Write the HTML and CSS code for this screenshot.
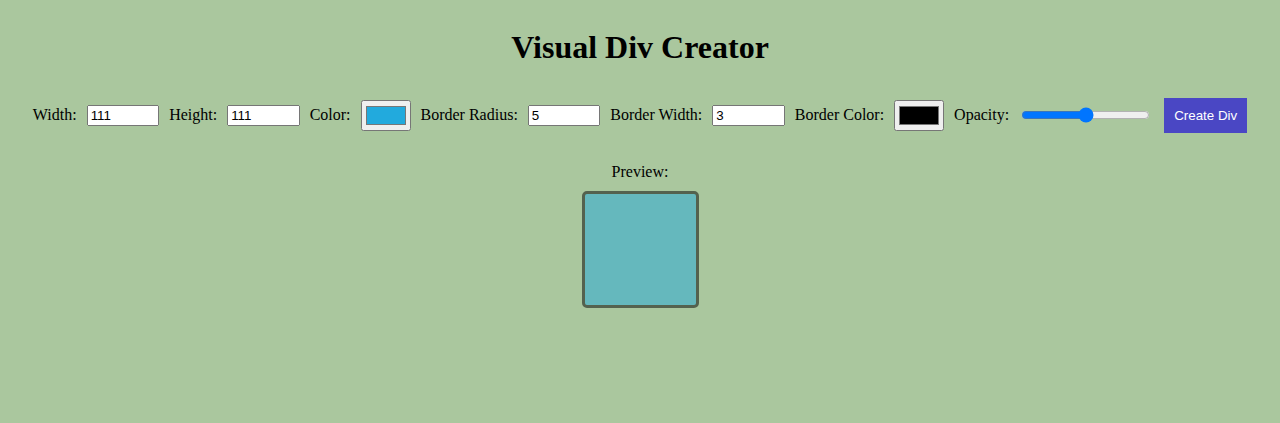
FILE: index.html
```html
<!DOCTYPE html>
<html>
<head>
<meta charset="utf-8">
<title>Visual Div Creator</title>
<link rel="stylesheet" href="styles.css">
</head>
<body>
<h1 class="title">Visual Div Creator</h1>
<div class="controls">
  <label class="lbl" for="w">Width:</label>
  <input class="txt" id="w" type="text" value="111">
  <label class="lbl" for="h">Height:</label>
  <input class="txt" id="h" type="text" value="111">
  <label class="lbl" for="c">Color:</label>
  <input class="clr" id="c" type="color" value="#22aadd">
  <label class="lbl" for="r">Border Radius:</label>
  <input class="txt" id="r" type="text" value="5">
  <label class="lbl" for="bw">Border Width:</label>
  <input class="txt" id="bw" type="text" value="3">
  <label class="lbl" for="bc">Border Color:</label>
  <input class="clr" id="bc" type="color" value="#000000">
  <label class="lbl" for="o">Opacity:</label>
  <input class="rng" id="o" type="range" min="0" max="1" step="0.01" value="0.5">
  <button class="btn" type="button">Create Div</button>
</div>
<div class="preview">
  <div class="preview-label">Preview:</div>
  <div class="preview-box"></div>
</div>
</body>
</html>
```
FILE: styles.css
```css
html, body {
  background: #aac79e;
}
body {
  margin: 8px;
  font-family: "Liberation Serif", "Times New Roman", serif;
  font-size: 16px;
  color: #000;
}
.title {
  text-align: center;
  font-size: 32px;
  font-weight: bold;
  margin: 0.67em 0;
}
.controls {
  display: flex;
  flex-wrap: wrap;
  justify-content: center;
  align-items: center;
  gap: 10px;
  padding-top: 10px;
}
.txt {
  box-sizing: border-box;
  width: 72.5px;
  height: 21px;
  font-family: "Liberation Sans", Arial, sans-serif;
  font-size: 13.333px;
  padding: 1px 2px;
  margin: 0;
}
.clr {
  box-sizing: border-box;
  width: 50px;
  height: 31px;
  margin: 0;
}
.rng {
  width: 129px;
  margin: 2px;
}
.btn {
  font-family: "Liberation Sans", Arial, sans-serif;
  font-size: 13.333px;
  background: #4a47c4;
  color: #fff;
  border: none;
  padding: 10px;
  margin: 0 0 0 2px;
}
.preview {
  display: flex;
  flex-direction: column;
  align-items: center;
  margin-top: 30px;
}
.preview-label {
  margin-bottom: 10px;
}
.preview-box {
  width: 111px;
  height: 111px;
  background: #22aadd;
  border: 3px solid #000;
  border-radius: 5px;
  opacity: 0.5;
}
```
